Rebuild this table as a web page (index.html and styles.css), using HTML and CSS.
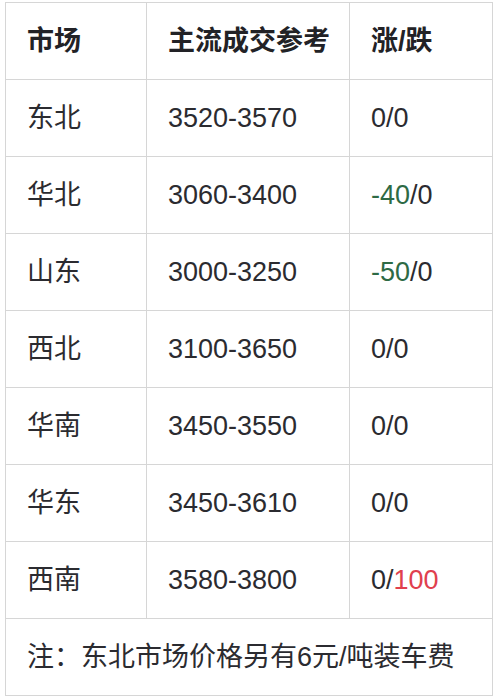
FILE: index.html
```html
<!DOCTYPE html>
<html lang="zh">
<head>
<meta charset="utf-8">
<link rel="stylesheet" href="styles.css">
</head>
<body>
<table class="price-table">
  <colgroup>
    <col class="c1"><col class="c2"><col class="c3">
  </colgroup>
  <thead>
    <tr><th>市场</th><th>主流成交参考</th><th>涨/跌</th></tr>
  </thead>
  <tbody>
    <tr><td>东北</td><td>3520-3570</td><td>0/0</td></tr>
    <tr><td>华北</td><td>3060-3400</td><td><span class="down">-40</span>/0</td></tr>
    <tr><td>山东</td><td>3000-3250</td><td><span class="down">-50</span>/0</td></tr>
    <tr><td>西北</td><td>3100-3650</td><td>0/0</td></tr>
    <tr><td>华南</td><td>3450-3550</td><td>0/0</td></tr>
    <tr><td>华东</td><td>3450-3610</td><td>0/0</td></tr>
    <tr><td>西南</td><td>3580-3800</td><td>0/<span class="up">100</span></td></tr>
    <tr><td colspan="3" class="note">注：东北市场价格另有6元/吨装车费</td></tr>
  </tbody>
</table>
</body>
</html>
```
FILE: styles.css
```css
html, body {
  margin: 0;
  padding: 0;
  background: #ffffff;
}
body {
  padding: 2px 0 0 5px;
  font-family: "Liberation Sans", "Noto Sans CJK SC", sans-serif;
  color: #2b2b30;
}
.price-table {
  border-collapse: collapse;
  width: 487px;
  table-layout: fixed;
  font-size: 27px;
}
.c1 { width: 141px; }
.c2 { width: 203px; }
.c3 { width: 143px; }
.price-table th,
.price-table td {
  border: 1px solid #d6d6d6;
  height: 77px;
  padding: 0 0 0 21px;
  text-align: left;
  vertical-align: middle;
  box-sizing: border-box;
  line-height: 1;
}
.price-table th {
  font-weight: bold;
  color: #222226;
}
.price-table td.note {
  padding-left: 21px;
}
.down { color: #2e6a45; }
.up { color: #e0404e; }
```
